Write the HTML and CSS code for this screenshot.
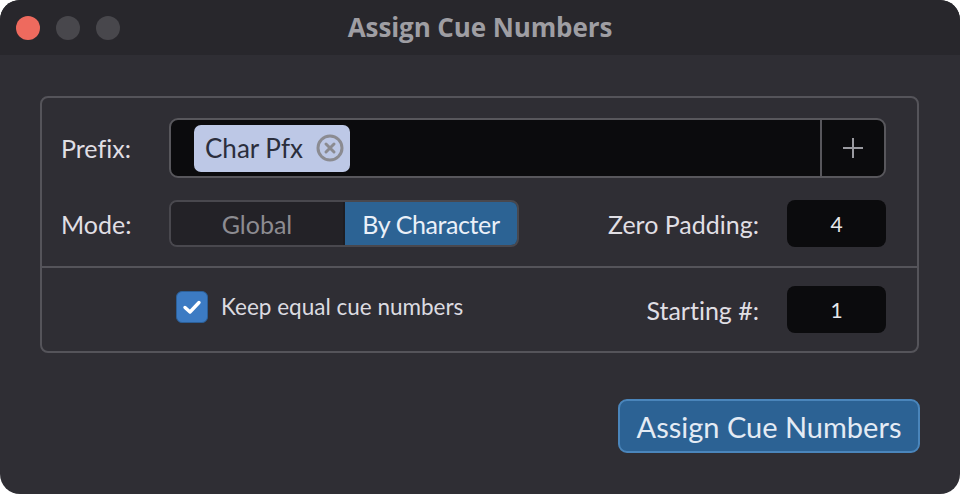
FILE: index.html
```html
<!DOCTYPE html>
<html>
<head>
<meta charset="utf-8">
<link rel="stylesheet" href="styles.css">
</head>
<body>
<div class="window">
  <div class="titlebar">
    <div class="lights">
      <span class="light red"></span>
      <span class="light"></span>
      <span class="light"></span>
    </div>
    <div class="title">Assign Cue Numbers</div>
    <div></div>
  </div>
  <div class="content">
    <div class="group">
      <div class="top">
        <div class="row">
          <div class="label">Prefix:</div>
          <div class="tokenfield">
            <div class="tokens">
              <div class="chip">
                <span>Char Pfx</span>
                <svg class="chip-x" width="28" height="28" viewBox="0 0 28 28">
                  <circle cx="14" cy="14" r="12" fill="none" stroke="#8b8b91" stroke-width="3"/>
                  <path d="M10 10 L18 18 M18 10 L10 18" stroke="#8b8b91" stroke-width="3" stroke-linecap="round"/>
                </svg>
              </div>
            </div>
            <div class="addbtn">
              <svg width="22" height="22" viewBox="0 0 22 22">
                <path d="M11 1 V21 M1 11 H21" stroke="#9a9aa0" stroke-width="2"/>
              </svg>
            </div>
          </div>
        </div>
        <div class="row">
          <div class="label">Mode:</div>
          <div class="segmented">
            <div class="seg">Global</div>
            <div class="seg active">By Character</div>
          </div>
          <div class="right-field">
            <div class="label">Zero Padding:</div>
            <div class="numfield">4</div>
          </div>
        </div>
      </div>
      <div class="bottom">
        <div class="row">
          <div class="label"></div>
          <label class="check">
            <span class="box">
              <svg width="20" height="16" viewBox="0 0 20 16">
                <path d="M3 8.5 L8 13 L17 3.5" fill="none" stroke="#ffffff" stroke-width="3.4" stroke-linecap="round" stroke-linejoin="round"/>
              </svg>
            </span>
            <span>Keep equal cue numbers</span>
          </label>
          <div class="right-field">
            <div class="label">Starting #:</div>
            <div class="numfield">1</div>
          </div>
        </div>
      </div>
    </div>
    <div class="actions">
      <button class="primary">Assign Cue Numbers</button>
    </div>
  </div>
</div>
</body>
</html>
```

FILE: styles.css
```css
html, body {
  margin: 0;
  padding: 0;
  background: #ffffff;
}
body {
  font-family: "Lato", "Open Sans", sans-serif;
  font-variant-ligatures: none;
}
.window {
  width: 960px;
  height: 494px;
  background: #2f2e34;
  border-radius: 20px;
  overflow: hidden;
  display: flex;
  flex-direction: column;
}
.titlebar {
  height: 55px;
  flex: none;
  background: #28272c;
  display: grid;
  grid-template-columns: 1fr auto 1fr;
  align-items: center;
}
.lights {
  display: flex;
  gap: 16px;
  padding-left: 16px;
}
.light {
  width: 24px;
  height: 24px;
  border-radius: 50%;
  background: #48474c;
}
.light.red {
  background: #ee6a5e;
}
.title {
  color: #9f9ea3;
  font-family: "Open Sans", sans-serif;
  font-weight: 700;
  font-size: 26px;
  letter-spacing: -0.1px;
  margin-top: -2px;
}
.content {
  padding: 41px 41px 0 40px;
  display: flex;
  flex-direction: column;
}
.group {
  border: 2px solid #55545a;
  border-radius: 8px;
  height: 257px;
  box-sizing: border-box;
  display: flex;
  flex-direction: column;
}
.top {
  padding: 20px 31px 19px 19px;
  display: flex;
  flex-direction: column;
  gap: 22px;
  border-bottom: 2px solid #55545a;
}
.bottom {
  padding: 18px 31px 0 19px;
}
.row {
  display: flex;
  align-items: center;
}
.row > .label {
  width: 108px;
  flex: none;
}
.label {
  color: #e0dfe4;
  font-size: 25px;
}
.tokenfield {
  flex: 1;
  height: 60px;
  box-sizing: border-box;
  background: #0b0b0d;
  border: 2px solid #58575c;
  border-radius: 9px;
  display: flex;
}
.tokens {
  flex: 1;
  display: flex;
  align-items: center;
  padding-left: 23px;
}
.chip {
  height: 47px;
  box-sizing: border-box;
  background: #bdc8e6;
  border-radius: 7px;
  display: flex;
  align-items: center;
  padding: 0 6px 0 11px;
  gap: 13px;
  color: #2b2e3c;
  font-size: 26px;
}
.chip-x {
  display: block;
}
.addbtn {
  width: 62px;
  border-left: 2px solid #58575c;
  display: flex;
  align-items: center;
  justify-content: center;
}
.segmented {
  width: 350px;
  height: 47px;
  box-sizing: border-box;
  border: 2px solid #49484e;
  border-radius: 8px;
  overflow: hidden;
  display: flex;
}
.seg {
  flex: 1;
  display: flex;
  align-items: center;
  justify-content: center;
  background: #232227;
  color: #8d8c91;
  font-size: 25px;
}
.seg.active {
  background: #2c6394;
  color: #eaf0f8;
  border-left: 2px solid #1e1d22;
  letter-spacing: -0.4px;
}
.right-field {
  margin-left: auto;
  display: flex;
  align-items: center;
  gap: 28px;
}
.numfield {
  width: 99px;
  height: 47px;
  background: #0b0b0d;
  border-radius: 8px;
  display: flex;
  align-items: center;
  justify-content: center;
  color: #e6e6ea;
  font-size: 21px;
}
.check {
  display: flex;
  align-items: center;
  gap: 13px;
  margin-left: 7px;
  margin-top: -6px;
  color: #dcdbe0;
  font-size: 22.5px;
}
.box {
  width: 32px;
  height: 32px;
  box-sizing: border-box;
  border-radius: 6px;
  background: #3c7bc3;
  border: 1px solid #2c5f97;
  display: flex;
  align-items: center;
  justify-content: center;
}
.actions {
  display: flex;
  justify-content: flex-end;
  padding-top: 46px;
}
.primary {
  width: 302px;
  height: 54px;
  box-sizing: border-box;
  background: #2c6294;
  border: 2px solid #4a85bb;
  border-radius: 9px;
  color: #e4ebf4;
  font-family: "Lato", "Open Sans", sans-serif;
  font-size: 29px;
  padding: 0;
  margin-right: -1px;
}
```
